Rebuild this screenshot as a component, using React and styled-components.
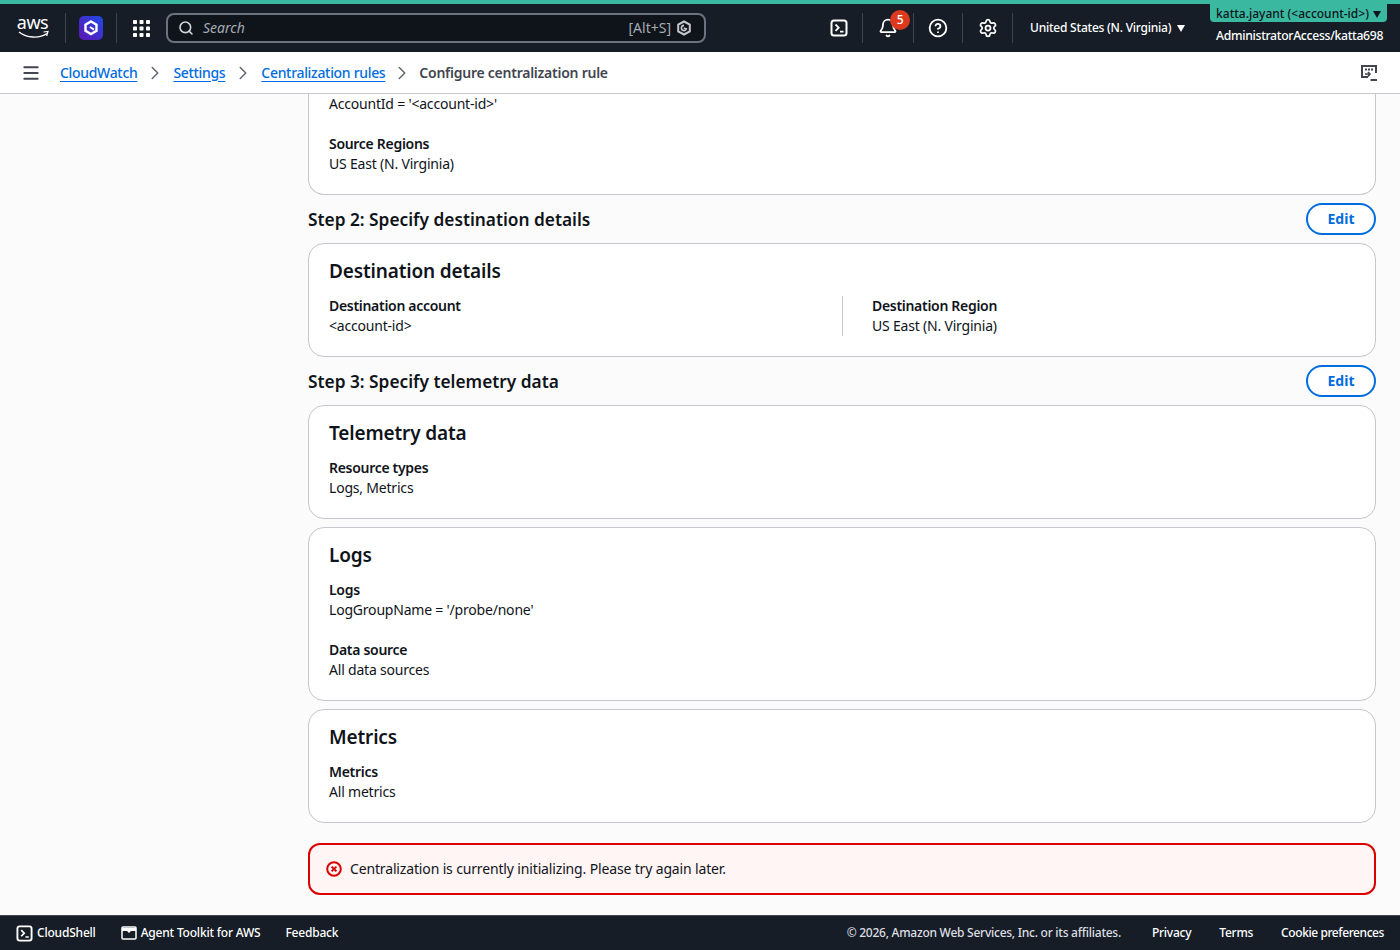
import React from 'react';
import styled, { createGlobalStyle } from 'styled-components';
import { Search, Bell, CircleHelp, Settings, Menu, ChevronRight } from 'lucide-react';

const GlobalStyle = createGlobalStyle`
  html, body, #root { height: 100%; }
  body {
    margin: 0;
    font-family: "Noto Sans", "Open Sans", sans-serif;
    font-size: 14px;
    line-height: 20px;
    letter-spacing: -0.2px;
    color: #0f141a;
    background: #fbfbfb;
  }
  * { box-sizing: border-box; }
`;

const Page = styled.div`
  height: 100vh;
  display: flex;
  flex-direction: column;
  overflow: hidden;
`;

const TopBar = styled.header`
  height: 52px;
  flex: none;
  display: flex;
  align-items: center;
  background: #161d26;
  border-top: 4px solid #3ab8a0;
  color: #fff;
  padding-left: 16px;
`;

const Logo = styled.div`
  width: 33px;
  height: 32px;
  display: flex;
  flex-direction: column;
  align-items: center;
  margin-right: 16px;
  span {
    font-size: 18px;
    line-height: 20px;
    letter-spacing: -0.5px;
  }
  svg { margin-top: -2px; }
`;

const Divider = styled.div`
  width: 1px;
  height: 30px;
  background: #3d4552;
  flex: none;
`;

const IconCell = styled.div`
  position: relative;
  width: ${(p) => p.$width || 50}px;
  height: 30px;
  flex: none;
  display: flex;
  align-items: center;
  justify-content: center;
`;

const SearchBox = styled.div`
  width: 540px;
  height: 30px;
  margin-right: 110px;
  flex: none;
  display: flex;
  align-items: center;
  gap: 9px;
  padding: 0 12px 0 10px;
  border: 2px solid #6b7280;
  border-radius: 8px;
  background: #0f141a;
  color: #a4abb5;
  letter-spacing: 0;
`;

const SearchText = styled.span`
  flex: 1;
  font-style: italic;
`;

const Shortcut = styled.span`
  display: flex;
  align-items: center;
  gap: 5px;
`;

const Badge = styled.span`
  position: absolute;
  top: -3px;
  left: 27px;
  width: 20px;
  height: 20px;
  border-radius: 50%;
  background: #db3a1f;
  color: #fff;
  font-size: 12px;
  font-weight: 500;
  display: flex;
  align-items: center;
  justify-content: center;
`;

const Region = styled.div`
  display: flex;
  align-items: center;
  gap: 5px;
  margin-left: 17px;
  width: 180px;
  font-size: 12px;
  font-weight: 500;
  letter-spacing: -0.22px;
  white-space: nowrap;
`;

const Caret = styled.span`
  width: 0;
  height: 0;
  border-left: 4.5px solid transparent;
  border-right: 4.5px solid transparent;
  border-top: 7px solid ${(p) => p.$color || '#fff'};
  margin-left: ${(p) => p.$gap || 0}px;
`;

const Account = styled.div`
  width: 190px;
  align-self: flex-start;
  display: flex;
  flex-direction: column;
  align-items: flex-start;
`;

const AccountPill = styled.div`
  width: 177px;
  height: 18px;
  padding-top: 2px;
  display: flex;
  align-items: center;
  justify-content: center;
  gap: 4px;
  background: #3ab8a0;
  color: #0f141a;
  border-radius: 0 0 4px 4px;
  font-size: 12px;
  font-weight: 500;
  letter-spacing: 0;
  white-space: nowrap;
`;

const Role = styled.div`
  margin-top: 4px;
  padding-left: 6px;
  font-size: 12.2px;
  font-weight: 500;
  letter-spacing: -0.3px;
  white-space: nowrap;
`;

const SubNav = styled.nav`
  height: 42px;
  flex: none;
  display: flex;
  align-items: center;
  padding: 0 22px 0 21px;
  background: #fff;
  border-bottom: 1px solid #c6c6cd;
`;

const Crumbs = styled.div`
  flex: 1;
  display: flex;
  align-items: center;
  margin-left: 19px;
`;

const CrumbLink = styled.a`
  color: #006ce0;
  text-decoration: underline;
  text-underline-offset: 3px;
  font-weight: 500;
  letter-spacing: -0.32px;
`;

const CrumbSep = styled.span`
  width: ${(p) => p.$width || 36}px;
  display: flex;
  justify-content: center;
  color: #656871;
`;

const CrumbCurrent = styled.span`
  color: #424650;
  font-weight: 600;
  letter-spacing: -0.25px;
`;

const Main = styled.main`
  flex: 1;
  min-height: 0;
  overflow: hidden;
  display: flex;
  flex-direction: column;
  gap: 8px;
  padding: 0 24px 0 308px;
`;

const Card = styled.section`
  background: #fff;
  border: 1px solid #c6c6cd;
  border-radius: 16px;
  padding: 12px 20px 20px;
`;

const ClippedCard = styled(Card)`
  border-top: none;
  border-radius: 0 0 16px 16px;
  padding-top: 0;
`;

const CardTitle = styled.h2`
  margin: 0 0 10px;
  font-size: 19px;
  line-height: 30px;
  font-weight: 600;
  letter-spacing: -0.15px;
`;

const Field = styled.div`
  & + & { margin-top: 20px; }
`;

const Label = styled.div`
  font-weight: 600;
  letter-spacing: -0.3px;
`;

const Columns = styled.div`
  display: grid;
  grid-template-columns: 1fr 1fr;
`;

const Column = styled.div`
  & + & {
    border-left: 1px solid #c6c6cd;
    padding-left: 29px;
  }
`;

const StepRow = styled.div`
  height: 32px;
  display: flex;
  align-items: center;
  justify-content: space-between;
`;

const StepTitle = styled.h3`
  margin: 1px 0 0;
  font-size: 17.3px;
  font-weight: 600;
  letter-spacing: 0;
`;

const EditButton = styled.button`
  width: 70px;
  height: 32px;
  padding: 0 0 2px;
  border: 2px solid #006ce0;
  border-radius: 20px;
  background: #fff;
  color: #006ce0;
  font: 700 14px "Noto Sans", sans-serif;
`;

const Alert = styled.div`
  height: 52px;
  flex: none;
  margin-top: 12px;
  display: flex;
  align-items: center;
  gap: 8px;
  padding: 0 16px;
  background: #fff5f5;
  border: 2px solid #db0000;
  border-radius: 12px;
  letter-spacing: -0.15px;
`;

const Footer = styled.footer`
  height: 35px;
  flex: none;
  margin-top: 20px;
  display: flex;
  align-items: center;
  justify-content: space-between;
  padding: 0 16px;
  background: #161d26;
  border-top: 1px solid #424650;
  color: #fff;
  font-size: 12px;
  font-weight: 500;
  letter-spacing: -0.2px;
`;

const FooterGroup = styled.div`
  display: flex;
  align-items: center;
  gap: ${(p) => p.$gap}px;
`;

const FooterItem = styled.span`
  display: flex;
  align-items: center;
  gap: 4px;
`;

const Copyright = styled.span`
  color: #dedee3;
  margin-right: 3px;
  letter-spacing: -0.25px;
`;

const FooterLink = styled.span`
  letter-spacing: ${(p) => p.$spacing || -0.25}px;
`;

function ShellIcon({ size = 18, color = '#fff' }) {
  return (
    <svg width={size} height={size} viewBox="0 0 18 18" fill="none" stroke={color} strokeWidth="2">
      <rect x="1.5" y="1.5" width="15" height="15" rx="2.5" />
      <path d="M5.5 5.5l3.2 3.2-3.2 3.2M10 12.7h3.5" strokeWidth="1.8" />
    </svg>
  );
}

function HexLogo({ size = 16, color = '#fff', strokeWidth = 2 }) {
  return (
    <svg width={size} height={size} viewBox="0 0 16 16" fill="none" stroke={color} strokeWidth={strokeWidth}>
      <path d="M8 1.5l5.8 3.2v6.6L8 14.5l-5.8-3.2V4.7z" />
      <path d="M8 5.4a2.6 2.6 0 1 0 2.4 3.6L7.8 8" strokeWidth="1.6" />
    </svg>
  );
}

function Extension() {
  return (
    <svg width="24" height="32" viewBox="0 0 24 32">
      <defs>
        <linearGradient id="ext" x1="1" y1="0" x2="0" y2="1">
          <stop offset="0" stopColor="#1f4be8" />
          <stop offset="1" stopColor="#5f14b0" />
        </linearGradient>
      </defs>
      <rect x="0" y="4" width="24" height="24" rx="5" fill="url(#ext)" />
      <path d="M12 9.5l5.5 3.1v6.3L12 22l-5.5-3.1v-6.3z" fill="none" stroke="#fff" strokeWidth="2.4" />
      <path d="M11 15l4 2.6" stroke="#fff" strokeWidth="2" />
    </svg>
  );
}

function Grid() {
  const dots = [];
  for (let y = 0; y < 3; y++) {
    for (let x = 0; x < 3; x++) {
      dots.push(<rect key={`${x}${y}`} x={x * 6.5} y={y * 6.5} width="4" height="4" rx="0.8" fill="#fff" />);
    }
  }
  return (
    <svg width="17" height="17" viewBox="0 0 17 17">
      {dots}
    </svg>
  );
}

function FeedbackIcon() {
  return (
    <svg width="18" height="18" viewBox="0 0 18 18" fill="none" stroke="#424650" strokeWidth="2">
      <path d="M8 13H2V2h14v7" />
      <path d="M6 5.5h.01M9 5.5h.01M12 5.5h.01" strokeLinecap="square" />
      <path d="M5 10h5M8 8l2 2-2 2.5" strokeWidth="1.6" />
      <path d="M10.5 16h6.5" />
    </svg>
  );
}

function ToolkitIcon() {
  return (
    <svg width="16" height="14" viewBox="0 0 16 14" fill="none" stroke="#fff" strokeWidth="1.5">
      <rect x="1" y="1" width="14" height="12" rx="1" />
      <path d="M1 3.5h14" strokeWidth="3" />
      <path d="M7 3v3h2V3" fill="#fff" strokeWidth="1" />
    </svg>
  );
}

function ErrorIcon() {
  return (
    <svg width="16" height="16" viewBox="0 0 16 16" fill="none" stroke="#db0000" strokeWidth="2">
      <circle cx="8" cy="8" r="6.8" />
      <path d="M5.6 5.6l4.8 4.8M10.4 5.6l-4.8 4.8" />
    </svg>
  );
}

function App() {
  return (
    <Page>
      <GlobalStyle />
      <TopBar>
        <Logo>
          <span>aws</span>
          <svg width="32" height="10" viewBox="0 0 32 10" fill="none" stroke="#fff" strokeWidth="1.4">
            <path d="M2 2c8 6 20 7 28 1.5" />
            <path d="M26.5 2l4.5-.5-1.3 4.5" strokeWidth="1.2" />
          </svg>
        </Logo>
        <Divider />
        <IconCell $width={50}>
          <Extension />
        </IconCell>
        <Divider />
        <IconCell $width={49}>
          <Grid />
        </IconCell>
        <SearchBox>
          <Search size={16} color="#d1d5db" strokeWidth={2.4} />
          <SearchText>Search</SearchText>
          <Shortcut>
            [Alt+S]
            <HexLogo color="#c6c6cd" />
          </Shortcut>
        </SearchBox>
        <IconCell $width={46}>
          <ShellIcon />
        </IconCell>
        <Divider />
        <IconCell>
          <Bell size={20} strokeWidth={2.2} />
          <Badge>5</Badge>
        </IconCell>
        <Divider />
        <IconCell $width={48}>
          <CircleHelp size={20} strokeWidth={2.2} />
        </IconCell>
        <Divider />
        <IconCell $width={49}>
          <Settings size={20} strokeWidth={2.1} />
        </IconCell>
        <Divider />
        <Region>
          United States (N. Virginia)
          <Caret $gap={1} />
        </Region>
        <Account>
          <AccountPill>
            katta.jayant (&lt;account-id&gt;)
            <Caret $color="#0f141a" />
          </AccountPill>
          <Role>AdministratorAccess/katta698</Role>
        </Account>
      </TopBar>

      <SubNav>
        <Menu size={20} color="#424650" strokeWidth={2.4} />
        <Crumbs>
          <CrumbLink>CloudWatch</CrumbLink>
          <CrumbSep><ChevronRight size={22} strokeWidth={1.7} /></CrumbSep>
          <CrumbLink>Settings</CrumbLink>
          <CrumbSep><ChevronRight size={22} strokeWidth={1.7} /></CrumbSep>
          <CrumbLink>Centralization rules</CrumbLink>
          <CrumbSep $width={34}><ChevronRight size={22} strokeWidth={1.7} /></CrumbSep>
          <CrumbCurrent>Configure centralization rule</CrumbCurrent>
        </Crumbs>
        <FeedbackIcon />
      </SubNav>

      <Main>
        <ClippedCard>
          <Field>AccountId = '&lt;account-id&gt;'</Field>
          <Field>
            <Label>Source Regions</Label>
            US East (N. Virginia)
          </Field>
        </ClippedCard>
        <StepRow>
          <StepTitle>Step 2: Specify destination details</StepTitle>
          <EditButton>Edit</EditButton>
        </StepRow>
        <Card>
          <CardTitle>Destination details</CardTitle>
          <Columns>
            <Column>
              <Label>Destination account</Label>
              &lt;account-id&gt;
            </Column>
            <Column>
              <Label>Destination Region</Label>
              US East (N. Virginia)
            </Column>
          </Columns>
        </Card>
        <StepRow>
          <StepTitle>Step 3: Specify telemetry data</StepTitle>
          <EditButton>Edit</EditButton>
        </StepRow>
        <Card>
          <CardTitle>Telemetry data</CardTitle>
          <Field>
            <Label>Resource types</Label>
            Logs, Metrics
          </Field>
        </Card>
        <Card>
          <CardTitle>Logs</CardTitle>
          <Field>
            <Label>Logs</Label>
            LogGroupName = '/probe/none'
          </Field>
          <Field>
            <Label>Data source</Label>
            All data sources
          </Field>
        </Card>
        <Card>
          <CardTitle>Metrics</CardTitle>
          <Field>
            <Label>Metrics</Label>
            All metrics
          </Field>
        </Card>
        <Alert>
          <ErrorIcon />
          Centralization is currently initializing. Please try again later.
        </Alert>
      </Main>

      <Footer>
        <FooterGroup $gap={25}>
          <FooterItem><ShellIcon size={17} />CloudShell</FooterItem>
          <FooterItem><ToolkitIcon />Agent Toolkit for AWS</FooterItem>
          <FooterItem>Feedback</FooterItem>
        </FooterGroup>
        <FooterGroup $gap={28}>
          <Copyright>© 2026, Amazon Web Services, Inc. or its affiliates.</Copyright>
          <FooterLink>Privacy</FooterLink>
          <FooterLink>Terms</FooterLink>
          <FooterLink $spacing={-0.42}>Cookie preferences</FooterLink>
        </FooterGroup>
      </Footer>
    </Page>
  );
}

export default App;
